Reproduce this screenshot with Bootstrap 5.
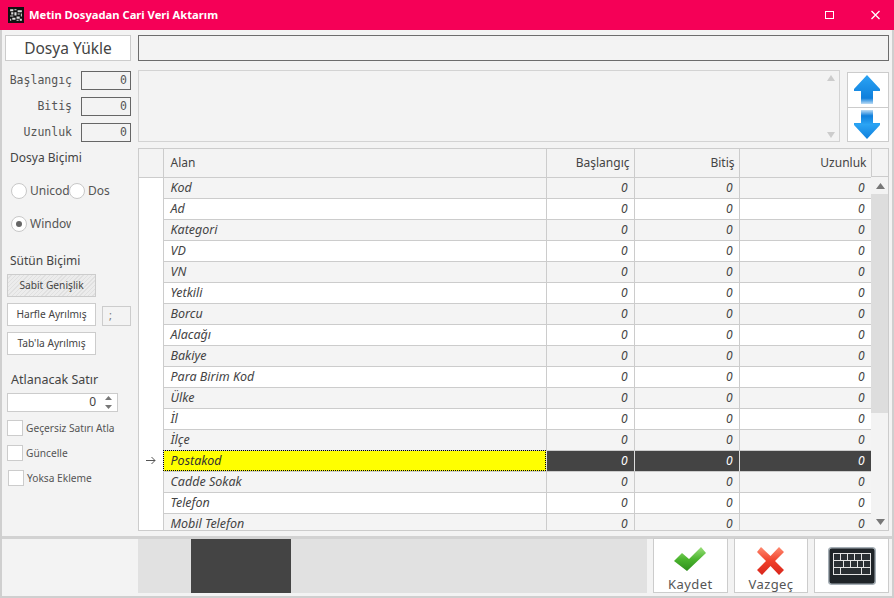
<!DOCTYPE html>
<html lang="tr"><head><meta charset="utf-8"><title>Metin Dosyadan Cari Veri Aktarım</title>
<link rel="stylesheet" href="https://cdn.jsdelivr.net/npm/bootstrap@5.3.0/dist/css/bootstrap.min.css">
<style>
html,body{height:100%;margin:0;background:#f3f3f3;overflow:hidden}
body{font-family:"Noto Sans","Open Sans",sans-serif;font-size:12px;color:#444;line-height:1.2}
.app-win{width:894px;height:598px;border:solid #cfcfcf;border-width:0 2px 2px 2px;display:flex;flex-direction:column}
.title-bar{height:30px;background:#f50057;margin:0 -2px;color:#fff;font-weight:700;font-size:11.2px;padding-left:8px;gap:5px;flex:none}
.title-bar .ctl{width:14px;height:14px;margin-right:27px}
.title-bar .ctl+.ctl{margin-right:11px}
.body-area{flex:1;display:flex;min-height:0;padding:0 3px 0 0}
.left-col{width:136px;flex:none;position:relative}
.right-col{flex:1;min-width:0;padding-top:5px}
.load-btn{display:block;margin:5px 0 0 3px;width:126px;height:26px;border:1px solid #ccc;background:#fff;font-size:15.5px;color:#444;text-align:center;line-height:24px;padding:0}
.path-box{height:26px;border:1px solid #6d6d6d;background:#f3f3f3}
.num-row{display:flex;justify-content:flex-end;align-items:center;font-family:"DejaVu Sans Mono",monospace;font-size:11.5px;height:19px;margin-bottom:7px;padding-right:7px;gap:9px;color:#555}
.num-box{width:50px;height:19px;border:1px solid #666;background:#f3f3f3;text-align:right;padding:0 3px 0 0;line-height:17px}
.nums{margin-top:10px}
.sect{font-size:12px;color:#444;padding-left:8px;line-height:17px}
.radio-line{display:flex;padding-left:9px;align-items:center;height:20px}
.rad{width:16px;height:16px;border:1px solid #c8c8c8;border-radius:50%;background:#fff;flex:none;position:relative}
.rad.on::after{content:"";position:absolute;left:4px;top:4px;width:6px;height:6px;border-radius:50%;background:#666}
.rad-txt{overflow:hidden;white-space:nowrap;font-size:12px;padding-left:3px;color:#555;flex:none}
.opt-btn{display:block;width:89px;height:23px;border:1px solid #ccc;background:#fff;font-size:10.2px;color:#444;padding:0;text-align:center;margin-left:5px}
.opt-btn.hatch{background:repeating-linear-gradient(135deg,#ececec 0 2px,#e0e0e0 2px 3px)}
.sep-box{width:29px;height:20px;border:1px solid #ccc;color:#777;font-size:11px;padding:1px 0 0 6px;margin-top:3px}
.spin-box{width:111px;height:19px;margin-left:5px;border:1px solid #ccc;background:#fff;display:flex;justify-content:flex-end;align-items:center;padding-right:5px;gap:9px;font-size:12px}
.spin-arrows{display:flex;flex-direction:column;gap:5px}
.chk-line{display:flex;align-items:center;height:16px;gap:3px;margin-left:5px;font-size:10.2px;color:#555;white-space:nowrap}
.chk-box{width:16px;height:16px;border:1px solid #ccc;background:#fff;flex:none}
.memo-row{display:flex;gap:7px;margin-top:9px;margin-bottom:6px;height:72px}
.memo-box{flex:1;border:1px solid #d3d3d3;display:flex;flex-direction:column;justify-content:space-between;align-items:flex-end;padding:4px 4px 3px 0;color:#c0c0c0}
.updown{width:42px;display:flex;flex-direction:column;margin-top:2px;height:70px;border:1px solid #ccc;background:#fff;flex:none}
.updown>div{flex:1;display:flex;align-items:center;justify-content:center;padding-right:3px}
.updown>div+div{border-top:1px solid #ccc}
.grid-wrap{height:383px;border:1px solid #ccc;overflow:hidden;position:relative;background:#f3f3f3}
.grid-t{table-layout:fixed;width:732px;margin:0;border-collapse:collapse;--bs-table-bg:transparent}
.grid-t td,.grid-t th{padding:0 6px;height:21px;border:0;border-right:1px solid #ccc;border-bottom:1px solid #ccc;font-weight:400;vertical-align:middle;line-height:18px;color:#444;white-space:nowrap;overflow:hidden}
.grid-t th{height:28px;background:#f3f3f3;font-size:12px;text-align:right;padding-right:4px}
.grid-t th.lft{text-align:left;padding-left:7px}
.grid-t td{font-style:italic;font-size:12px;text-align:right;background:#fff}
.grid-t td.nm{text-align:left;font-size:12.5px;padding-left:7px}
.grid-t tr.alt td{background:#f4f4f4}
.grid-t td.ind,.grid-t tr.alt td.ind{background:#fff;border-bottom:0;padding:0;text-align:center;font-style:normal}
.grid-t tr.cur td{background:#444;color:#fff;border-right-color:#ddd;border-bottom-color:#ccc}
.grid-t tr.cur td.nm{background:#ff0;color:#333;outline:1px dotted #000;outline-offset:-1px}
.grid-t tr.cur td.ind{background:#fff;color:#444}
.sb-col{position:absolute;left:732px;top:28px;bottom:0;width:18px;background:#f3f3f3;display:flex;flex-direction:column;align-items:center;padding-top:6px}
.sb-top-cell{position:absolute;left:732px;top:0;width:18px;height:28px;border-bottom:1px solid #ccc}
.sb-thumb{width:18px;height:219px;background:#dddddd;margin-top:5px}
.sb-end{position:absolute;bottom:5px;left:5px}
.foot-bar{height:60px;flex:none;display:flex;border-top:3px solid #d2d2d2;padding-right:3px}
.prog{margin-left:136px;width:511px;height:54px;background:#e1e1e1;padding-left:53px}
.prog>div{width:100px;height:100%;background:#444}
.act-btn{width:75px;height:55px;margin:-1px 0 0 6px;border:1px solid #ccc;background:#fff;padding:0;color:#555;font-size:13px;letter-spacing:.4px;display:flex;flex-direction:column;align-items:center;line-height:15px}
.act-btn svg{flex:none}
</style></head><body>
<div class="app-win">
<div class="title-bar d-flex align-items-center">
<svg width="16" height="16" viewBox="0 0 15 15"><rect width="15" height="15" fill="#111"/><path d="M2 2h3v2H2zM6 2h2v1H6zM9 3h4v2H9zM3 5h2v2H3zM6 5h2v3H6zM9 6h2v1H9zM12 6h1v3h-1zM2 8h3v1H2zM4 10h3v2H4zM8 9h3v2H8zM2 11h1v2H2zM8 12h2v1H8zM11 11h2v2h-2z" fill="#ddd"/></svg>
<span class="flex-grow-1">Metin Dosyadan Cari Veri Aktarım</span>
<svg class="ctl" viewBox="0 0 14 14"><rect x="2.5" y="3.500" width="8" height="7" fill="none" stroke="#fff" stroke-width="1"/></svg>
<svg class="ctl" viewBox="0 0 14 14"><path d="M2.5 3l8 8M10.500 3l-8 8" stroke="#fff" stroke-width="1.3"/></svg>
</div>
<div class="body-area">
<div class="left-col">
<button class="load-btn" type="button">Dosya Yükle</button>
<div class="nums">
<div class="num-row"><span>Başlangıç</span><div class="num-box">0</div></div>
<div class="num-row"><span>Bitiş</span><div class="num-box">0</div></div>
<div class="num-row"><span>Uzunluk</span><div class="num-box">0</div></div>
</div>
<div class="sect" style="margin-top:0">Dosya Biçimi</div>
<div class="radio-line" style="margin-top:15px"><span class="rad"></span><span class="rad-txt" style="width:42px">Unicode</span><span class="rad"></span><span class="rad-txt">Dos</span></div>
<div class="radio-line" style="margin-top:13px"><span class="rad on"></span><span class="rad-txt" style="width:44px">Windows</span></div>
<div class="sect" style="margin-top:18px;margin-bottom:5px">Sütün Biçimi</div>
<button class="opt-btn hatch" type="button">Sabit Genişlik</button>
<div class="d-flex gap-2" style="margin-top:6px;margin-bottom:6px"><button class="opt-btn" type="button">Harfle Ayrılmış</button><div class="sep-box" style="margin-left:-2px">;</div></div>
<button class="opt-btn" type="button">Tab'la Ayrılmış</button>
<div class="sect" style="margin-top:16px;margin-left:1px;margin-bottom:5px;font-size:12.5px">Atlanacak Satır</div>
<div class="spin-box"><span>0</span><span class="spin-arrows"><svg width="7" height="4" class="d-block"><path d="M0 4l3.5-4 3.5 4z" fill="#777"/></svg><svg width="7" height="4" class="d-block"><path d="M0 0l3.5 4 3.5-4z" fill="#777"/></svg></span></div>
<div class="chk-line" style="margin-top:8px"><span class="chk-box"></span>Geçersiz Satırı Atla</div>
<div class="chk-line" style="margin-top:9px"><span class="chk-box"></span>Güncelle</div>
<div class="chk-line" style="margin-top:9px;margin-left:6px"><span class="chk-box"></span>Yoksa Ekleme</div>
</div>
<div class="right-col">
<div class="path-box"></div>
<div class="memo-row">
<div class="memo-box"><svg width="8" height="6"><path d="M0 6l4-6 4 6z" fill="#ccc"/></svg><svg width="8" height="6"><path d="M0 0l4 6 4-6z" fill="#ccc"/></svg></div>
<div class="updown">
<div><svg width="26" height="29" viewBox="0 0 26 29"><defs><linearGradient id="gu" x1="0" y1="0" x2="0" y2="1"><stop offset="0" stop-color="#2ba4f4"/><stop offset=".8" stop-color="#0f7fdc"/><stop offset="1" stop-color="#bcdcf5"/></linearGradient></defs><path d="M13 0L26 14v2H19V29H7V16H0v-2z" fill="url(#gu)"/></svg></div>
<div><svg width="26" height="29" viewBox="0 0 26 29"><defs><linearGradient id="gd" x1="0" y1="1" x2="0" y2="0"><stop offset="0" stop-color="#0f7fdc"/><stop offset=".5" stop-color="#2ba4f4"/><stop offset=".8" stop-color="#0f7fdc"/><stop offset="1" stop-color="#bcdcf5"/></linearGradient></defs><path d="M13 29L26 15v-2H19V0H7V13H0v2z" fill="url(#gd)"/></svg></div>
</div>
</div>
<div class="grid-wrap">
<table class="table grid-t">
<colgroup><col style="width:24px"><col style="width:383px"><col style="width:88px"><col style="width:105px"><col style="width:132px"></colgroup>
<thead><tr><th></th><th class="lft">Alan</th><th>Başlangıç</th><th>Bitiş</th><th>Uzunluk</th></tr></thead>
<tbody>
<tr class="alt"><td class="ind"></td><td class="nm">Kod</td><td>0</td><td>0</td><td>0</td></tr>
<tr><td class="ind"></td><td class="nm">Ad</td><td>0</td><td>0</td><td>0</td></tr>
<tr class="alt"><td class="ind"></td><td class="nm">Kategori</td><td>0</td><td>0</td><td>0</td></tr>
<tr><td class="ind"></td><td class="nm">VD</td><td>0</td><td>0</td><td>0</td></tr>
<tr class="alt"><td class="ind"></td><td class="nm">VN</td><td>0</td><td>0</td><td>0</td></tr>
<tr><td class="ind"></td><td class="nm">Yetkili</td><td>0</td><td>0</td><td>0</td></tr>
<tr class="alt"><td class="ind"></td><td class="nm">Borcu</td><td>0</td><td>0</td><td>0</td></tr>
<tr><td class="ind"></td><td class="nm">Alacağı</td><td>0</td><td>0</td><td>0</td></tr>
<tr class="alt"><td class="ind"></td><td class="nm">Bakiye</td><td>0</td><td>0</td><td>0</td></tr>
<tr><td class="ind"></td><td class="nm">Para Birim Kod</td><td>0</td><td>0</td><td>0</td></tr>
<tr class="alt"><td class="ind"></td><td class="nm">Ülke</td><td>0</td><td>0</td><td>0</td></tr>
<tr><td class="ind"></td><td class="nm">İl</td><td>0</td><td>0</td><td>0</td></tr>
<tr class="alt"><td class="ind"></td><td class="nm">İlçe</td><td>0</td><td>0</td><td>0</td></tr>
<tr class="cur"><td class="ind"><svg width="10" height="9" viewBox="0 0 10 9" class="d-block mx-auto"><path d="M0 4.500h9M5.500 1L9 4.500 5.500 8" fill="none" stroke="#555" stroke-width="1"/></svg></td><td class="nm">Postakod</td><td>0</td><td>0</td><td>0</td></tr>
<tr class="alt"><td class="ind"></td><td class="nm">Cadde Sokak</td><td>0</td><td>0</td><td>0</td></tr>
<tr><td class="ind"></td><td class="nm">Telefon</td><td>0</td><td>0</td><td>0</td></tr>
<tr class="alt"><td class="ind"></td><td class="nm">Mobil Telefon</td><td>0</td><td>0</td><td>0</td></tr>
</tbody></table>
<div class="sb-top-cell"></div>
<div class="sb-col"><svg width="9" height="6" class="d-block"><path d="M0 6l4.500-6 4.500 6z" fill="#777"/></svg><div class="sb-thumb"></div><svg width="9" height="6" class="sb-end"><path d="M0 0l4.500 6 4.500-6z" fill="#777"/></svg></div>
</div>
</div>
</div>
<div class="foot-bar">
<div class="prog"><div></div></div>
<button class="act-btn" type="button"><svg width="32" height="24" viewBox="0 0 32 24" style="margin-top:8px"><defs><linearGradient id="gg" x1="0" y1="0" x2="0" y2="1"><stop offset="0" stop-color="#9be07c"/><stop offset=".5" stop-color="#4cb52f"/><stop offset="1" stop-color="#2e8f1c"/></linearGradient></defs><path d="M0 14L8 6l7 6L27 0l5 6L13 24z" fill="url(#gg)"/></svg><span style="margin-top:6px">Kaydet</span></button>
<button class="act-btn" type="button"><svg width="27" height="28" viewBox="0 0 27 28" style="margin-top:8px"><defs><linearGradient id="gr" x1="0" y1="0" x2="0" y2="1"><stop offset="0" stop-color="#ff8a70"/><stop offset=".5" stop-color="#f0402a"/><stop offset="1" stop-color="#d8261c"/></linearGradient></defs><path d="M4 0l9.500 9L22 0l5 5-9 9 9 9-5 5-8.500-9L5 28l-5-5 9-9L0 5z" fill="url(#gr)"/></svg><span style="margin-top:2px">Vazgeç</span></button>
<button class="act-btn" type="button"><svg width="48" height="38" viewBox="0 0 48 38" style="margin-top:8px"><rect x=".75" y=".75" width="46.500" height="36.500" rx="3" fill="#1f2428" stroke="#a5aeb5" stroke-width="1.500"/><path d="M5 6h38v22H5z" fill="#e4e4e4"/><path d="M6 7h6v6H6zM13 7h6v6h-6zM20 7h6v6h-6zM27 7h6v6h-6zM34 7h8v6h-8zM6 14h9v6H6zM16 14h6v6h-6zM23 14h6v6h-6zM30 14h5v6h-5zM36 14h6v6h-6zM6 21h6v6H6zM13 21h20v6H13zM34 21h8v6h-8z" fill="#2a2f33"/></svg></button>
</div>
</div>
</body></html>
